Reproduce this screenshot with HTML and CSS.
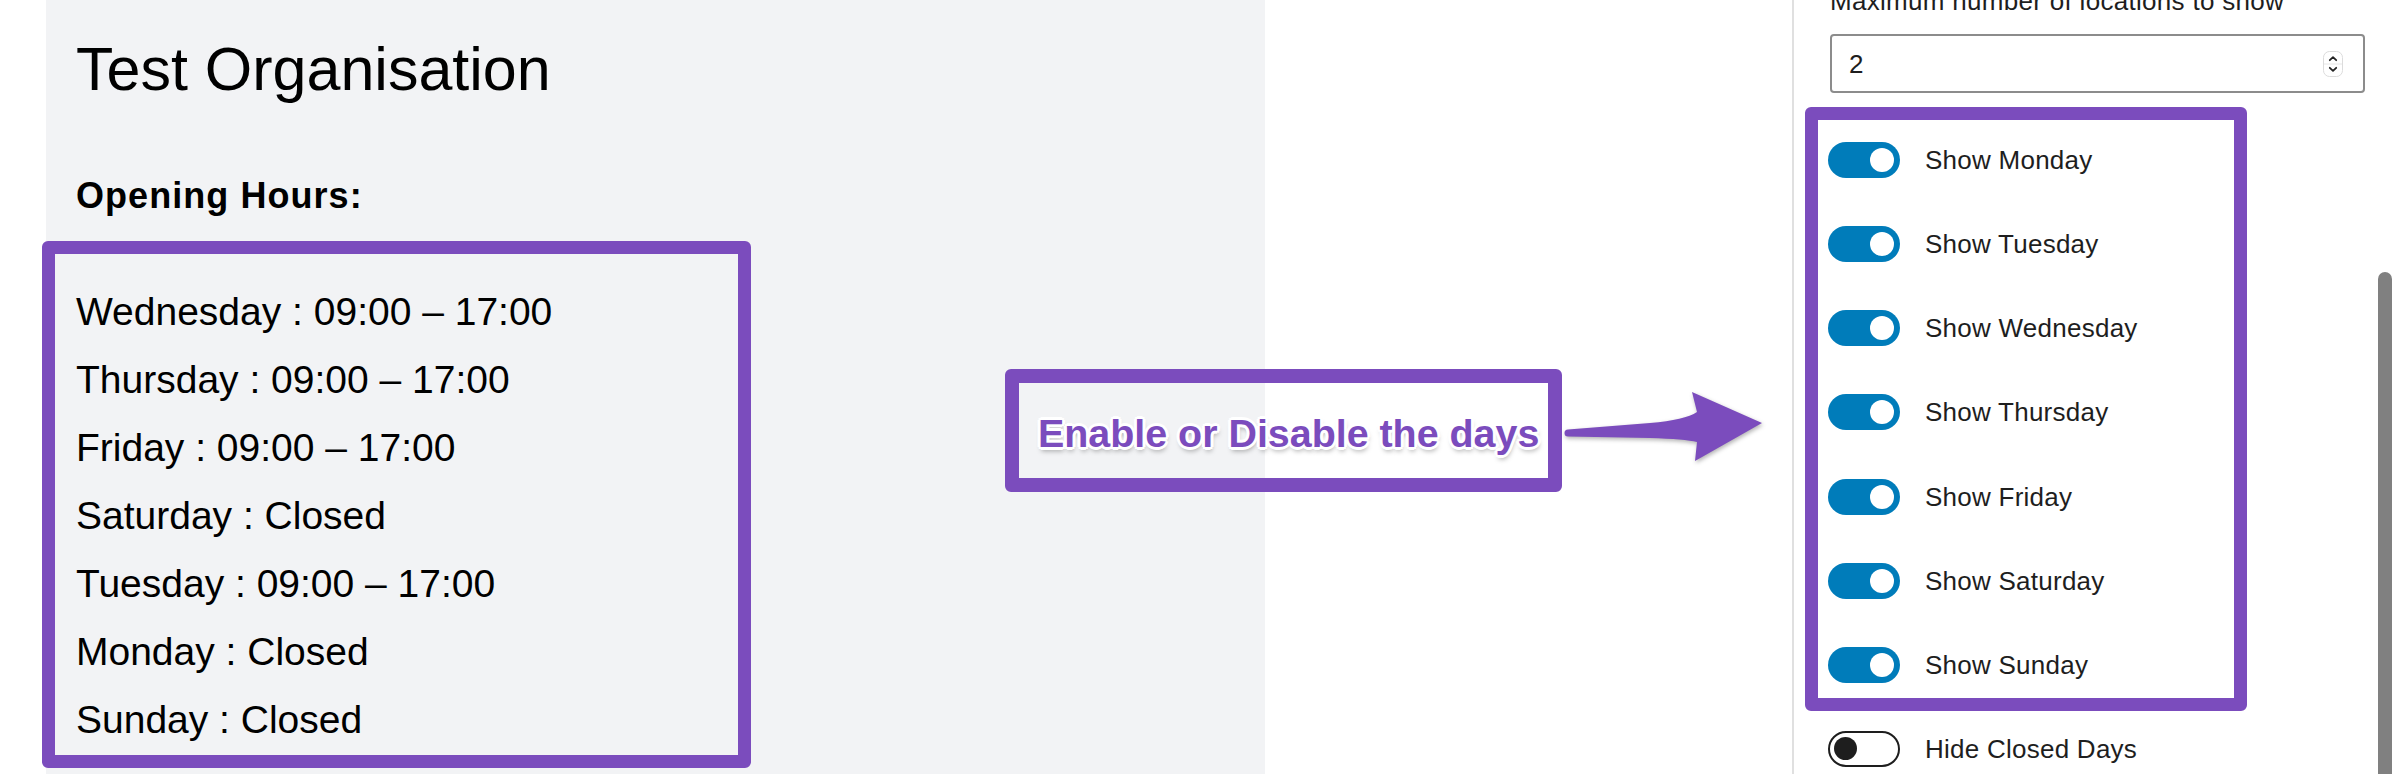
FILE: index.html
```html
<!DOCTYPE html>
<html lang="en">
<head>
<meta charset="utf-8">
<title>Opening Hours block</title>
<link rel="stylesheet" href="styles.css">
</head>
<body>
<div class="page">
  <section class="preview">
    <h1 class="org-title">Test Organisation</h1>
    <h2 class="hours-heading">Opening Hours:</h2>
    <div class="hours-box">
      <p class="hours-line">Wednesday : 09:00 – 17:00</p>
      <p class="hours-line">Thursday : 09:00 – 17:00</p>
      <p class="hours-line">Friday : 09:00 – 17:00</p>
      <p class="hours-line">Saturday : Closed</p>
      <p class="hours-line">Tuesday : 09:00 – 17:00</p>
      <p class="hours-line">Monday : Closed</p>
      <p class="hours-line">Sunday : Closed</p>
    </div>
  </section>
  <div class="gutter"></div>
  <aside class="sidebar">
    <div class="sidebar-content">
      <label class="field-label">Maximum number of locations to show</label>
      <div class="number-input">
        <span class="number-value">2</span>
        <svg class="spinner" width="20" height="26" viewBox="0 0 20 26">
          <rect x="0.5" y="0.5" width="19" height="25" rx="6" fill="#fff" stroke="#dcdcdc"/>
          <line x1="1" y1="13" x2="19" y2="13" stroke="#e6e6e6"/>
          <path d="M6.8 9.2 L10 6.2 L13.2 9.2" fill="none" stroke="#222" stroke-width="1.8" stroke-linecap="round" stroke-linejoin="round"/>
          <path d="M6.8 16.8 L10 19.8 L13.2 16.8" fill="none" stroke="#222" stroke-width="1.8" stroke-linecap="round" stroke-linejoin="round"/>
        </svg>
      </div>
      <div class="toggles">
        <div class="toggle-row"><span class="toggle on"><span class="knob"></span></span><span class="toggle-label">Show Monday</span></div>
        <div class="toggle-row"><span class="toggle on"><span class="knob"></span></span><span class="toggle-label">Show Tuesday</span></div>
        <div class="toggle-row"><span class="toggle on"><span class="knob"></span></span><span class="toggle-label">Show Wednesday</span></div>
        <div class="toggle-row"><span class="toggle on"><span class="knob"></span></span><span class="toggle-label">Show Thursday</span></div>
        <div class="toggle-row"><span class="toggle on"><span class="knob"></span></span><span class="toggle-label">Show Friday</span></div>
        <div class="toggle-row"><span class="toggle on"><span class="knob"></span></span><span class="toggle-label">Show Saturday</span></div>
        <div class="toggle-row"><span class="toggle on"><span class="knob"></span></span><span class="toggle-label">Show Sunday</span></div>
      </div>
      <div class="toggle-row hide-row"><span class="toggle off"><span class="knob"></span></span><span class="toggle-label">Hide Closed Days</span></div>
    </div>
    <div class="scrollbar"><div class="thumb"></div></div>
  </aside>
</div>

<div class="callout"><span class="callout-text">Enable or Disable the days</span></div>
<svg class="arrow" width="240" height="120" viewBox="0 0 240 120">
  <path d="M18 59.5 L100 53 Q135 50 147 42 L142 22 L212 53 L145 91 L147 72 Q135 69 100 68 L18 66.5 A3.5 3.5 0 0 1 18 59.5 Z" fill="#7b4cbd"/>
</svg>
</body>
</html>
```

FILE: styles.css
```css
* { box-sizing: border-box; }

html, body {
  margin: 0;
  padding: 0;
  background: #ffffff;
}

body {
  width: 2394px;
  height: 774px;
  overflow: hidden;
  position: relative;
  font-family: "Liberation Sans", Arial, sans-serif;
}

.page {
  display: flex;
  height: 774px;
  padding-left: 46px;
}

/* ---------- left preview ---------- */
.preview {
  width: 1219px;
  flex-shrink: 0;
  height: 100%;
  background: #f2f3f5;
  padding: 39px 0 0 30px;
  color: #000;
}

.org-title {
  margin: 0;
  font-size: 61px;
  line-height: 60px;
  font-weight: 400;
}

.hours-heading {
  margin: 79px 0 27px;
  font-size: 36px;
  line-height: 36px;
  font-weight: 700;
  letter-spacing: 1.05px;
}

.hours-box {
  margin-left: -34px;
  width: 709px;
  height: 527px;
  border: 13px solid #7b4cbd;
  border-radius: 6px;
  padding: 24px 0 0 21px;
}

.hours-line {
  margin: 0;
  font-size: 39px;
  line-height: 68px;
  white-space: nowrap;
}

.gutter { flex: 1; }

/* ---------- right sidebar ---------- */
.sidebar {
  width: 602px;
  flex-shrink: 0;
  border-left: 2px solid #e0e0e0;
  display: flex;
  color: #1e1e1e;
}

.sidebar-content {
  flex: 1;
  padding-left: 36px;
}

.field-label {
  display: block;
  margin-top: -15px;
  font-size: 26px;
  line-height: 32px;
  letter-spacing: 0.3px;
  white-space: nowrap;
}

.number-input {
  margin-top: 17px;
  width: 535px;
  height: 59px;
  border: 2px solid #8c8c8c;
  border-radius: 4px;
  display: flex;
  align-items: center;
  justify-content: space-between;
  padding: 0 20px 0 17px;
}

.number-value {
  font-size: 26px;
  line-height: 30px;
}

.spinner { display: block; }

.toggles {
  margin-top: 14px;
  margin-left: -25px;
  width: 442px;
  border: 13px solid #7b4cbd;
  border-radius: 6px;
  padding: 22px 0 15px 10px;
  display: flex;
  flex-direction: column;
  gap: 48.17px;
}

.toggle-row {
  display: flex;
  align-items: center;
  gap: 25px;
  height: 36px;
}

.hide-row {
  margin-top: 20px;
  margin-left: -2px;
}

.toggle {
  width: 72px;
  height: 36px;
  border-radius: 18px;
  display: flex;
  align-items: center;
  flex-shrink: 0;
}

.toggle.on {
  background: #007cba;
  justify-content: flex-end;
  padding: 0 6px;
}

.toggle.on .knob {
  width: 24px;
  height: 24px;
  border-radius: 50%;
  background: #fff;
}

.toggle.off {
  background: #fff;
  border: 2px solid #1e1e1e;
  justify-content: flex-start;
  padding: 0 4px;
}

.toggle.off .knob {
  width: 23px;
  height: 23px;
  border-radius: 50%;
  background: #1e1e1e;
}

.toggle-label {
  font-size: 26px;
  line-height: 32px;
  letter-spacing: 0.25px;
  white-space: nowrap;
}

.scrollbar {
  width: 18px;
  flex-shrink: 0;
  display: flex;
  flex-direction: column;
}

.thumb {
  margin-top: 272px;
  margin-left: 2px;
  width: 14px;
  flex: 1;
  background: #808080;
  border-radius: 7px 7px 0 0;
}

/* ---------- annotation overlay ---------- */
.callout {
  position: absolute;
  left: 1005px;
  top: 369px;
  width: 557px;
  height: 123px;
  border: 14px solid #7b4cbd;
  border-radius: 6px;
  display: flex;
  align-items: center;
  padding: 5px 0 0 19px;
}

.callout-text {
  font-size: 39.4px;
  line-height: 44px;
  font-weight: 700;
  color: #7b4cbd;
  white-space: nowrap;
  text-shadow:
    3px 0 0 #fff, -3px 0 0 #fff, 0 3px 0 #fff, 0 -3px 0 #fff,
    2px 2px 0 #fff, -2px -2px 0 #fff, 2px -2px 0 #fff, -2px 2px 0 #fff,
    1px 4px 5px rgba(0, 0, 0, 0.35);
}

.arrow {
  position: absolute;
  left: 1550px;
  top: 370px;
  filter: drop-shadow(1px 2px 2px rgba(0, 0, 0, 0.3));
}
```
